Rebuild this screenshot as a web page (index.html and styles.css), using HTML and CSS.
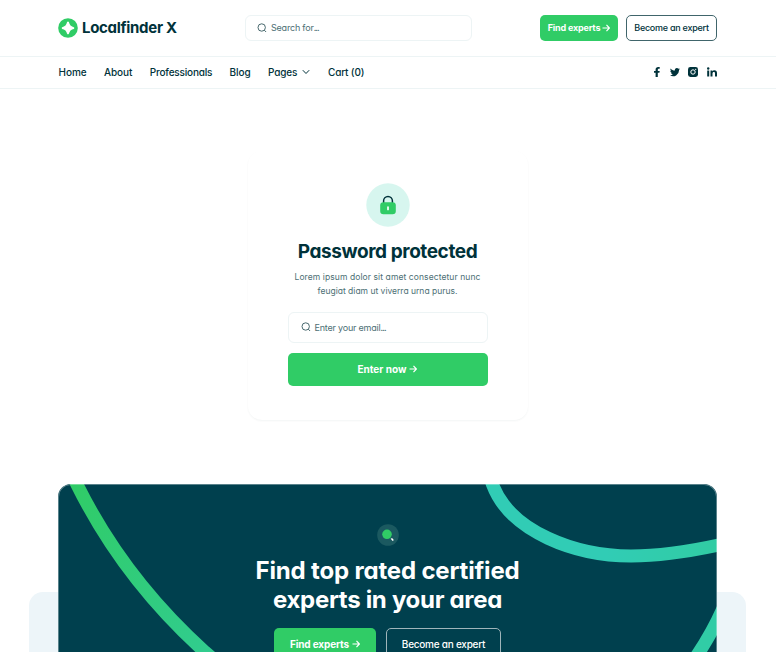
FILE: index.html
```html
<!DOCTYPE html>
<html lang="en">
<head>
<meta charset="utf-8">
<title>Localfinder X</title>
<link rel="stylesheet" href="styles.css">
</head>
<body>
<svg class="defs" aria-hidden="true">
  <symbol id="search" viewBox="0 0 10 10"><circle cx="4.7" cy="4.5" r="3.7"/><path d="M7.3 7.2 9.1 9"/></symbol>
  <symbol id="arrow" viewBox="0 0 10 10"><path d="M.6 5H9M5.6 1.2 9.200 5 5.6 8.8"/></symbol>
</svg>
<header>
  <div class="top">
    <a class="logo">
      <svg class="mark" viewBox="0 0 20 20"><circle cx="10" cy="10" r="9.8" fill="#30cc66"/><path d="M10 3.6Q11 3.600 11.6 5.9 12.2 7.8 14.1 8.4 16.4 9 16.4 10 16.4 11 14.1 11.600 12.2 12.2 11.600 14.1 11 16.4 10 16.4 9 16.4 8.4 14.1 7.800 12.2 5.9 11.6 3.6 11 3.6 10 3.6 9 5.9 8.4 7.8 7.8 8.4 5.9 9 3.6 10 3.6Z" fill="#fff"/></svg>
      <span class="name">Localfinder X</span>
    </a>
    <div class="search"><svg class="ico"><use href="#search"/></svg><span class="t-search">Search for<span class="dots">...</span></span></div>
    <div class="actions">
      <a class="btn green small"><span class="t-find">Find experts</span><svg class="arr"><use href="#arrow"/></svg></a>
      <a class="btn outline small"><span class="t-become">Become an expert</span></a>
    </div>
  </div>
  <div class="bar">
    <nav>
      <a>Home</a><a>About</a><a class="long">Professionals</a><a>Blog</a>
      <a class="drop">Pages<svg viewBox="0 0 8 6"><path d="M.8 1.2 4 4.5 7.2 1.2"/></svg></a>
      <a>Cart (0)</a>
    </nav>
    <div class="social">
      <svg viewBox="0 0 10 10"><path d="M3.6 10V5.7H2V3.9h1.6V2.6C3.6.9 4.6 0 6.200 0c.8 0 1.5.1 1.5.1v1.6h-.8c-.9 0-1.1.5-1.1 1v1.2h1.9l-.3 1.8H5.800V10Z"/></svg>
      <svg viewBox="0 0 10 10"><path d="M10 2c-.4.2-.8.3-1.2.3.4-.3.8-.7.9-1.1-.4.2-.9.4-1.3.5A2.05 2.05 0 0 0 4.9 3.6C3.2 3.5 1.700 2.700.7 1.400.1 2.300.4 3.500 1.300 4.100c-.3 0-.6-.1-.9-.2 0 1 .7 1.800 1.600 2-.3.1-.6.1-.9 0 .3.800 1 1.400 1.900 1.400A4.200 4.200 0 0 1 0 8.200a5.800 5.800 0 0 0 9-5.200c.4-.3.700-.6 1-1Z"/></svg>
      <svg viewBox="0 0 10 10"><rect width="10" height="10" rx="2.4"/><circle cx="5" cy="5" r="2.2" fill="none" stroke="#fff"/><circle cx="7.700" cy="2.300" r=".65" fill="#fff"/></svg>
      <svg viewBox="0 0 10 10"><circle cx="1.200" cy="1.500" r="1.200"/><path d="M.2 3.500h2V9.500h-2ZM3.500 3.500h1.900v.8c.4-.6 1-1 1.900-1C9.300 3.300 10 4.400 10 6.200V9.500H8V6.500c0-.9-.2-1.500-1.100-1.500-1 0-1.400.6-1.400 1.500v3h-2Z"/></svg>
    </div>
  </div>
</header>
<main>
  <section class="card">
    <svg class="lock" viewBox="0 0 44 44"><circle cx="22" cy="22" r="21.700" fill="#d7f6ef"/><path d="M17.600 20V17.800a4.400 4.400 0 0 1 8.800 0V20" fill="none" stroke="#00323a" stroke-width="1.500"/><rect x="14.200" y="19.200" width="15.600" height="12" rx="3.200" fill="#30cc66"/><path d="M22 24v2.500" stroke="#fff" stroke-width="1.700" stroke-linecap="round"/></svg>
    <h1>Password protected</h1>
    <p><span class="p1">Lorem ipsum dolor sit amet consectetur nunc</span><br><span class="p2">feugiat diam ut viverra urna purus.</span></p>
    <div class="email"><svg class="ico"><use href="#search"/></svg><span class="t-email">Enter your email<span class="dots">...</span></span></div>
    <a class="btn green enter"><span class="t-enter">Enter now</span><svg class="arr"><use href="#arrow"/></svg></a>
  </section>
  <section class="closing">
    <div class="panel"></div>
    <div class="cta">
      <svg class="bands" viewBox="0 0 659 168">
        <defs>
          <linearGradient id="a" x1="0" y1="0" x2="1" y2="1"><stop offset="0" stop-color="#30cc66"/><stop offset="1" stop-color="#31cc91"/></linearGradient>
          <linearGradient id="b" x1="0" x2="1"><stop offset=".5" stop-color="#31ccb5"/><stop offset="1" stop-color="#31cca2"/></linearGradient>
        </defs>
        <g transform="translate(.5 .5)">
          <path d="M14-9 18.500 0Q65 94 146.500 167.500L160 179" stroke="url(#a)"/>
          <path d="M431-9 434 0C452 48 518 71.500 572.500 71.500 605 71.500 632 67 665 59.500" stroke="url(#b)"/>
          <path d="M671 108Q658 143 635 176" stroke="#31cca6"/>
        </g>
      </svg>
      <svg class="lens" viewBox="0 0 22 22"><circle cx="11" cy="11" r="10.800" fill="#1b5960"/><circle cx="10" cy="10.300" r="4.800" fill="#30cc66"/><path d="m13.800 14 .5.500" stroke="#fff" stroke-width="1"/><path d="m15 15.200.8.800" stroke="#fff" stroke-width="1.700" stroke-linecap="round"/></svg>
      <h2><span class="h-a">Find top rated certified</span><br><span class="h-b">experts in your area</span></h2>
      <div class="pair">
        <a class="btn green big"><span class="t-find2">Find experts</span><svg class="arr"><use href="#arrow"/></svg></a>
        <a class="btn outline light big"><span class="t-become2">Become an expert</span></a>
      </div>
    </div>
  </section>
</main>
</body>
</html>
```
FILE: styles.css
```css
* { box-sizing: border-box; }
html, body { height: 652px; overflow: hidden; }
body {
  margin: 0;
  display: flex;
  flex-direction: column;
  background: #fff;
  color: #00323a;
  font-family: Inter, "Liberation Sans", sans-serif;
  font-feature-settings: "cv11" 1;
  font-size: 10px;
}
h1, h2, p { margin: 0; }
span { white-space: nowrap; }
.defs { display: none; }

.top {
  height: 57px;
  padding: 0 59px 1px 58px;
  display: grid;
  grid-template-columns: 187px 227px 1fr;
  align-items: center;
  border-bottom: 1px solid #edf4f5;
}
.logo { display: flex; align-items: center; gap: 4px; }
.mark { width: 20px; height: 20px; }
.name { font-size: 15px; font-weight: 700; letter-spacing: -.3px; }
.search, .email {
  display: flex;
  align-items: center;
  gap: 4px;
  border: 1px solid #edf4f5;
  border-radius: 6px;
  color: #4c6f75;
  font-size: 9px;
}
.search { height: 26px; padding-left: 11px; }
.t-search { letter-spacing: -.2px; }
.t-email { letter-spacing: -.2px; }
.dots { letter-spacing: -.9px; }
.ico { width: 10px; height: 10px; fill: none; stroke: #36595f; stroke-width: .9; }
.arr { width: 8px; height: 8px; fill: none; stroke: currentColor; stroke-width: 1.5; }
.actions { display: flex; justify-content: flex-end; gap: 8px; }
.btn { display: flex; align-items: center; justify-content: center; border-radius: 5px; }
.green { background: #30cc66; color: #fff; font-weight: 700; gap: 3px; }
.outline { border: 1px solid #40656b; font-weight: 500; }
.small { height: 26px; font-size: 9px; }
.small.green { width: 78px; gap: 2px; }
.small.outline { width: 91px; }
.t-find { letter-spacing: -.18px; }
.t-become { letter-spacing: -.25px; }

.bar {
  height: 32px;
  padding: 0 59px 1px 58.500px;
  display: flex;
  align-items: center;
  justify-content: space-between;
  border-bottom: 1px solid #edf4f5;
}
nav { display: flex; gap: 17.400px; font-size: 10px; font-weight: 500; }
nav a { white-space: nowrap; letter-spacing: -.05px; }
nav .long { letter-spacing: -.2px; }
nav .drop { display: flex; align-items: center; gap: 4.500px; letter-spacing: -.2px; }
nav a:last-child { letter-spacing: -.15px; }
.drop svg { width: 8px; height: 6px; fill: none; stroke: currentColor; margin-right: 1px; }
.social { display: flex; gap: 8.200px; margin-right: .5px; fill: #00323a; }
.social svg { width: 10px; height: 10px; }

.card {
  width: 280px;
  height: 269px;
  margin: 62px auto 0;
  padding: 32px 40.500px 0 39.500px;
  display: flex;
  flex-direction: column;
  align-items: center;
  border-radius: 14px;
  box-shadow: 0 1px 2px rgba(0, 50, 58, .05);
}
.lock { width: 44px; height: 44px; flex: none; }
h1 { margin-top: 13px; font-size: 19px; line-height: 24px; font-weight: 700; white-space: nowrap; letter-spacing: -.42px; }
p { margin-top: 6px; font-size: 8.500px; line-height: 14px; text-align: center; color: #4c6f75; }
.p1 { letter-spacing: .09px; }
.email { width: 200px; height: 31px; margin-top: 14px; padding: 0 0 1px 12px; flex: none; }
.enter { width: 200px; height: 33px; margin-top: 10px; padding-bottom: 1px; font-size: 10px; flex: none; }

.closing { position: relative; height: 168px; margin-top: 64px; padding: 0 59px 0 58px; }
.panel {
  position: absolute;
  left: 29px;
  right: 30px;
  top: 108px;
  bottom: 0;
  border-radius: 14px 14px 0 0;
  background: #edf5f9;
}
.cta {
  position: relative;
  height: 168px;
  padding-top: 40px;
  display: flex;
  flex-direction: column;
  align-items: center;
  border-radius: 13px 13px 0 0;
  background: #00404e;
  color: #fff;
  overflow: hidden;
}
.cta::after {
  content: "";
  position: absolute;
  inset: 0 0 -1px;
  border: 1px solid rgba(255, 255, 255, .35);
  border-radius: 13px 13px 0 0;
}
.bands { position: absolute; left: 0; top: 0; width: 659px; height: 168px; fill: none; stroke-width: 13px; }
.lens, h2, .pair { position: relative; flex: none; }
.lens { width: 22px; height: 22px; }
h2 { margin-top: 10px; font-size: 24px; line-height: 29px; font-weight: 700; text-align: center; }
.h-a { letter-spacing: -.17px; }
.h-b { letter-spacing: -.3px; }
.pair { display: flex; gap: 10px; margin-top: 14px; }
.big { height: 32px; font-size: 10px; }
.big.green { width: 102px; }
.big.outline { width: 115px; }
.t-find2 { letter-spacing: -.15px; }
.t-become2 { letter-spacing: -.25px; }
.light { border-color: #9fb5ba; }
```
